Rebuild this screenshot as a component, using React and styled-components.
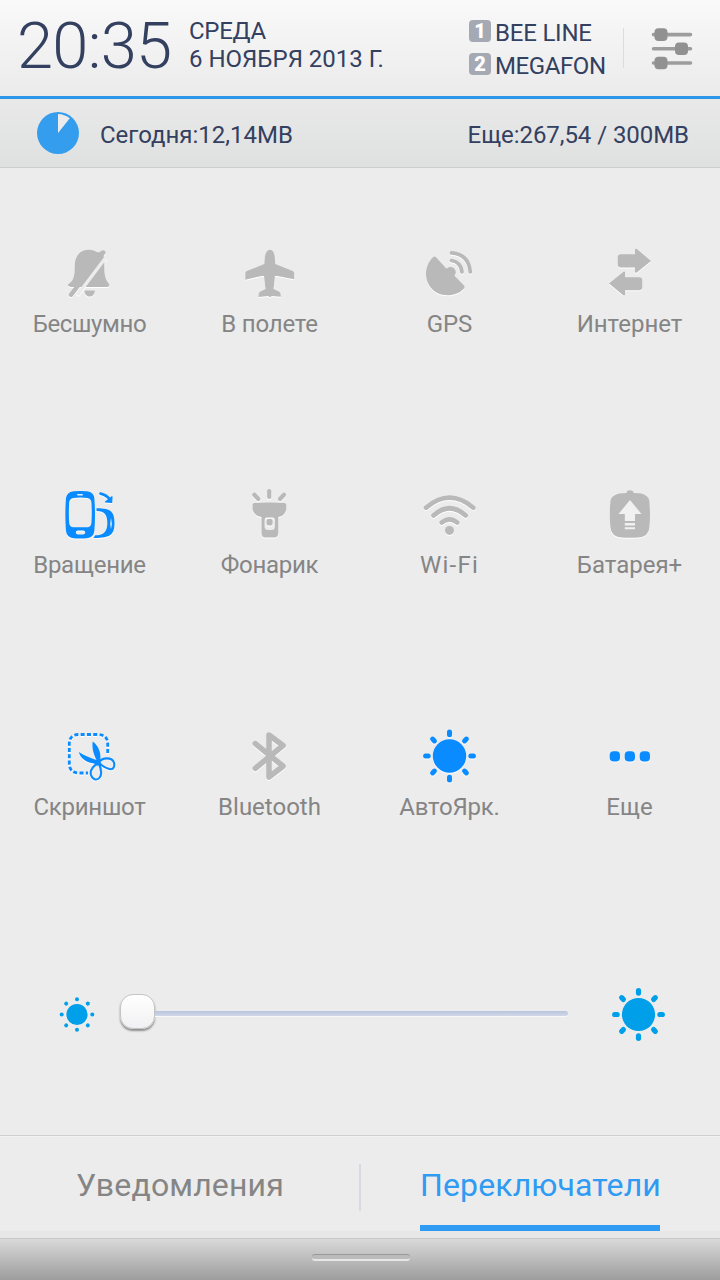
import React from 'react';
import styled, { createGlobalStyle } from 'styled-components';

const BLUE = '#0a8bff';
const GRAY = '#b9b9b9';
const BG = '#ececec';

const GlobalStyle = createGlobalStyle`
  * { box-sizing: border-box; }
  body { margin: 0; background: ${BG}; font-family: Roboto, "Liberation Sans", sans-serif; }
`;

const Screen = styled.main`
  width: 720px;
  height: 1280px;
  display: flex;
  flex-direction: column;
  background: ${BG};
  overflow: hidden;
`;

const Text = styled.span`
  font-size: ${(p) => p.$size}px;
  line-height: ${(p) => p.$line}px;
  letter-spacing: ${(p) => p.$track || 0}px;
  font-weight: ${(p) => p.$weight || 400};
  white-space: nowrap;
`;

const Header = styled.header`
  height: 99px;
  display: flex;
  align-items: flex-start;
  padding-left: 17px;
  color: #33405f;
  background: linear-gradient(#f9f9f9, #ebebeb);
  border-bottom: 3px solid #2f97ea;
`;

const Clock = styled.div`
  width: 172px;
  padding-top: 9px;
`;

const DateBlock = styled.div`
  width: 280px;
  padding-top: 17px;
  display: flex;
  flex-direction: column;
`;

const Carriers = styled.div`
  width: 154px;
  padding-top: 17px;
  display: flex;
  flex-direction: column;
`;

const Carrier = styled.div`
  height: 33px;
  display: flex;
  align-items: flex-start;
  gap: 4px;
`;

const SimBadge = styled.span`
  width: 22px;
  height: 22px;
  margin-top: 3px;
  border-radius: 4px;
  background: #a5a9b4;
  color: #fff;
  font-size: 20px;
  font-weight: 900;
  line-height: 22px;
  text-align: center;
`;

const HeaderDivider = styled.div`
  width: 1px;
  height: 40px;
  margin: 28px 27px 0 0;
  background: #d8dce4;
`;

const SlidersButton = styled.button`
  margin: 26px 0 0;
  padding: 0;
  border: 0;
  background: none;
  line-height: 0;
`;

const Traffic = styled.section`
  height: 69px;
  display: flex;
  align-items: center;
  padding: 0 31px 0 36px;
  color: #33405f;
  background: linear-gradient(#e9e9e9, #dfe0e0);
  border-bottom: 1px solid #cdcdcd;
`;

const TrafficToday = styled.div`
  flex: 1;
  margin-left: 20px;
  padding-top: 4px;
`;

const TrafficLeft = styled.div`
  padding-top: 4px;
`;

const Label = styled(Text)`
  margin-top: 4px;
  margin-right: 1px;
  color: #858585;
`;

const Toggle = styled.div`
  display: flex;
  flex-direction: column;
  align-items: center;
  color: ${(p) => (p.$on ? BLUE : GRAY)};
`;

const Grid = styled.section`
  height: 782px;
  padding-top: 73px;
  display: grid;
  grid-template-columns: repeat(4, 180px);
  grid-auto-rows: 241px;
  overflow: hidden;

  ${Toggle}:nth-child(n + 9) ${Label} {
    margin-top: 5px;
  }
`;

const Icon = styled.svg`
  width: 64px;
  height: 64px;
  overflow: visible;
  fill: currentColor;
  filter: drop-shadow(0 1px 0.5px #fff);
`;

const Brightness = styled.section`
  height: 185px;
  display: flex;
  align-items: flex-start;
  padding: 34px 0 0 58px;
  color: #009fea;
`;

const BrightnessIcon = styled.svg`
  width: ${(p) => p.$size}px;
  height: ${(p) => p.$size}px;
  margin-top: ${(p) => p.$top}px;
  overflow: visible;
  fill: currentColor;
`;

const Slider = styled.div`
  width: 448px;
  height: 38px;
  margin: 9px 43px 0 24px;
  display: flex;
  align-items: center;
`;

const Thumb = styled.div`
  width: 35px;
  height: 35px;
  margin-bottom: 1px;
  border: 1px solid #c4c4c4;
  border-radius: 13px;
  background: linear-gradient(#fff, #f1f1f3);
  box-shadow: 0 2px 2px rgba(0, 0, 0, 0.4);
`;

const Track = styled.div`
  flex: 1;
  height: 5px;
  margin-top: 2px;
  border-radius: 0 3px 3px 0;
  background: linear-gradient(#b9c4dc, #d1d8e8);
  box-shadow: 0 1px 0 #f8f8f8;
`;

const Tabs = styled.nav`
  height: 103px;
  display: flex;
  align-items: flex-start;
  border-top: 1px solid #cfcfcf;
  box-shadow: inset 0 1px 0 #f2f2f2, inset 0 -7px 0 #e7e7e7;
`;

const Tab = styled.div`
  flex: 1;
  height: 95px;
  display: flex;
  justify-content: center;
  color: ${(p) => (p.$active ? '#2f9bf2' : '#858585')};
`;

const TabLabel = styled(Text)`
  width: ${(p) => (p.$active ? '240px' : 'auto')};
  height: 95px;
  padding-top: 29px;
  border-bottom: ${(p) => (p.$active ? '6px solid #2f9bf2' : '0')};
`;

const TabDivider = styled.div`
  width: 2px;
  height: 47px;
  margin: 28px -1px 0;
  background: #d7dae5;
`;

const Handle = styled.footer`
  flex: 1;
  display: flex;
  justify-content: center;
  padding: 15px 0 0 2px;
  border-top: 1px solid #c8c8c8;
  background: linear-gradient(#d9d9d9, #9d9d9d);
`;

const Grip = styled.div`
  width: 98px;
  height: 7px;
  border-radius: 3px;
  border-top: 1px solid #999;
  border-bottom: 2px solid #e6e6e6;
  background: #bbb;
`;

const Rays = ({ c, r, rx, ry }) =>
  [0, 45, 90, 135, 180, 225, 270, 315].map((a) => (
    <rect key={a} x={c - rx} y={c - r - ry} width={rx * 2} height={ry * 2} rx={rx} transform={`rotate(${a} ${c} ${c})`} />
  ));

const icons = {
  silent: (
    <>
      <path d="M12 45.500c-3-.5-2.500-2.800 0-3.600 3.500-2.900 4.700-7 4.700-15.900C16.700 15 22 8.800 31 8.800c3 0 5.300.7 7.300 2 2.500 1.200 4 .2 5.500-1.600L46.500 18c-.7 13 0 19.500 4 24.300 1.500 1.700.7 3.700-1.500 3.700H12z" />
      <path d="M26.500 49.500h10.300c0 8-10.300 8-10.300 0z" />
      <path d="M48 16.200 19.500 54" stroke={BG} strokeWidth="3.400" fill="none" />
      <path d="M45.300 11.500 13 53.800" stroke="currentColor" strokeWidth="4.400" strokeLinecap="round" fill="none" />
    </>
  ),
  plane: (
    <path d="M32 8.800c3 0 4.700 4 4.900 8.500l.3 5.800 17.500 7q1.500.7 1.500 2.200v6l-17-3.400h-2.200L35.500 48l5.800 2.800q1.500.9 1.500 4.900L34 55l-2 1.300L30 55l-9.500.9q0-4.200 1.500-5.100l5.500-2.800L26 34.900h-2.500L7.300 38.700v-6.400q0-1.500 1.500-2.200l17.500-7 .5-5.800c.2-4.500 2.200-8.500 5.200-8.500z" />
  ),
  gps: (
    <>
      <path d="M18 16.200 28.500 27.800a5 5 0 0 1 8 7L46 44.600q1.200 1.300 0 2.900C36 58.500 15 56 9.500 41 6 32 9 22 15 16.300q1.600-1.500 3-.1z" />
      <path d="M33.500 19.500q9.500 1.500 10.500 11.500M33.500 11.800q17.500 1.500 18.800 19.200" stroke="currentColor" strokeWidth="3.700" strokeLinecap="round" fill="none" />
    </>
  ),
  internet: (
    <>
      <path d="M23 13.300h14V8.500q.6-1.300 1.800-.5L53 20 38.800 31.500q-1.300.8-1.800-.5v-4.500H23q-3.300 0-3.300-3.300v-6.600q0-3.300 3.300-3.300z" />
      <path d="M41 36.200H27v-5.100q-.6-1-1.700-.1L11 42.500l14.200 11.700q1.200.8 1.800-.2v-4.700h14q3.300 0 3.300-3.300v-6.500q0-3.300-3.300-3.300z" />
    </>
  ),
  rotate: (
    <>
      <path fillRule="evenodd" d="M15.500 9.300q6.700-.8 13.400 0 7.100.8 7.500 7.500 1.200 16 0 31.700-.6 7-7.500 7.700-6.700.8-13.400 0-6.800-.7-7.600-7.700-1.200-16 0-31.700.8-6.700 7.600-7.500zM15.500 15.900q-4 .6-4.300 4.600-.7 10.500 0 20.400.3 4 4.100 4.300h14q3.800-.3 4.100-4.300.7-9.900 0-20.400-.3-4-4.200-4.600-6.900-.8-13.700 0zM20 48.500q-2.200 0-2.200 2t2.200 2h5q2.200 0 2.200-2t-2.200-2z" />
      <rect x="19" y="11.900" width="6" height="1.600" rx=".8" fill="#dff0ff" />
      <path fillRule="evenodd" d="M38.500 26.300C52 26.300 56.500 29 56.500 41S52 56.200 35.500 56l1.700-2.700C45 53.200 49 50.500 49.300 42 49.500 33 47 29 38.500 29zM53 36q-1.400 5.500 0 11 1.600-5.500 0-11z" />
      <path d="M42.500 11.600q6 1.200 9.500 6" stroke="currentColor" strokeWidth="2.700" strokeLinecap="round" fill="none" />
      <path d="m54 14.800-.3 5.500-6.200-.3z" stroke="currentColor" strokeWidth="1.200" strokeLinejoin="round" />
    </>
  ),
  torch: (
    <>
      <path d="M31.200 9v6M16.300 12.800l4 4.200M46 12.800 42 17" stroke="currentColor" strokeWidth="4.200" strokeLinecap="round" />
      <path fillRule="evenodd" d="M16 21q-1.500.5-1.500 2v4.500q2 6.500 9 7.500V51q.2 4.500 4 4.500h8.800q3.700 0 4-4.500V35q6.500-1 8-7.500V23q0-1.500-1.500-2-15.500-1.200-30.800 0zm12.500 14.500h6.200q2.200.3 2.200 2.500v6.500q-.2 3.500-3 3.500h-4.300q-3-.2-3-3.500V38q0-2.200 1.900-2.500z" />
      <rect x="28.600" y="37" width="6" height="6.400" rx="2" />
    </>
  ),
  wifi: (
    <>
      <path d="M8 25.700q23.500-20 47.300 0M15.500 33.500q16-14.500 32.200 0M23.700 40.600q7.800-6.600 15.500 0" stroke="currentColor" strokeWidth="4.600" strokeLinecap="round" fill="none" />
      <circle cx="31.500" cy="48.400" r="4.500" />
    </>
  ),
  battery: (
    <>
      <path d="M28.500 11q0-2.800 3.500-2.800t3.500 2.800q15.500-.5 16 9.500 1 12 0 24-.5 10.500-11.500 11-8 .6-16 0-11-.5-11.700-11-1-12 0-24Q12.500 11 28.500 11z" />
      <path fill="#f1f1f1" d="m32 18 11.500 14H37v7H26.800v-7h-6.300zM26.800 41H37v2.500H26.800zM26.800 45.200H37v2H26.800z" />
    </>
  ),
  screenshot: (
    <>
      <path d="M49.700 30V21q0-9-9-9.500H20q-8.500.5-8.700 9V41q.2 8.500 8.700 9h10" stroke="currentColor" strokeWidth="2.800" strokeDasharray="4 2.300" fill="none" />
      <path d="M40.500 39.800C44 34 54 34 56 39.500c1.300 6-2 7.500-5.500 6.300-4-1.200-7-3.500-10-6zM40.500 39.800C36 42.500 31.500 47 33 52c1.800 5.500 6.500 5.500 8.700 2.500 2.500-3.500 1-10-1.200-14.700z" stroke="currentColor" strokeWidth="2.100" fill={BG} />
      <path d="M34.700 18.500C41 23 43.500 31 42.200 38.500l1.300 2.700-4.500 1.600-3-2.300C28.500 39.500 22.500 35.500 20.700 29c6.500 4 12 6 17.800 8C35.500 31 33.700 25 34.700 18.500z" />
    </>
  ),
  bluetooth: (
    <path d="M17.300 20.600 45 43.200 31 54V12l14 10.600L17.300 45.300" stroke="currentColor" strokeWidth="5.600" strokeLinecap="round" strokeLinejoin="round" fill="none" />
  ),
  auto: (
    <>
      <circle cx="31.500" cy="33" r="16.700" />
      <g transform="translate(-.5 1)"><Rays c={32} r={22.600} rx={2.500} ry={3.800} /></g>
    </>
  ),
  more: [12, 27, 42].map((x) => <rect key={x} x={x - 0.3} y="28.300" width="10.300" height="10.300" rx="4" />),
};

const toggles = [
  { id: 'silent', label: 'Бесшумно', track: -0.35 },
  { id: 'plane', label: 'В полете', track: -0.2 },
  { id: 'gps', label: 'GPS' },
  { id: 'internet', label: 'Интернет' },
  { id: 'rotate', label: 'Вращение', on: true, track: -0.25 },
  { id: 'torch', label: 'Фонарик', track: -0.3 },
  { id: 'wifi', label: 'Wi-Fi', track: 1.2 },
  { id: 'battery', label: 'Батарея+' },
  { id: 'screenshot', label: 'Скриншот', on: true, track: -0.25 },
  { id: 'bluetooth', label: 'Bluetooth' },
  { id: 'auto', label: 'АвтоЯрк.', on: true, track: -0.2 },
  { id: 'more', label: 'Еще', on: true },
];

export default function App() {
  return (
    <Screen>
      <GlobalStyle />
      <Header>
        <Clock><Text $size={65} $line={74} $weight={300} $track={-0.7}>20:35</Text></Clock>
        <DateBlock>
          <Text $size={24} $line={28} $track={-0.3}>СРЕДА</Text>
          <Text $size={24} $line={28}>6 НОЯБРЯ 2013 Г.</Text>
        </DateBlock>
        <Carriers>
          <Carrier><SimBadge>1</SimBadge><Text $size={24} $line={32} $track={-0.2}>BEE LINE</Text></Carrier>
          <Carrier><SimBadge>2</SimBadge><Text $size={24} $line={32} $track={-0.4}>MEGAFON</Text></Carrier>
        </Carriers>
        <HeaderDivider />
        <SlidersButton aria-label="Настройки">
          <svg width="42" height="46" viewBox="0 0 42 46" fill="#919191">
            <path d="M2.500 8.600h37M2.500 22.800h37M2.500 37h37" stroke="#9d9d9d" strokeWidth="3.600" strokeLinecap="round" />
            <rect x="3.500" y="2.300" width="13" height="12.600" rx="4" />
            <rect x="24" y="16.500" width="13" height="12.600" rx="4" />
            <rect x="3.500" y="30.700" width="13" height="12.600" rx="4" />
          </svg>
        </SlidersButton>
      </Header>
      <Traffic>
        <svg width="44" height="44" viewBox="0 0 44 44">
          <circle cx="22" cy="22" r="21" fill="#349dee" />
          <path d="M22 22V3q6.500.3 11.800 4.200z" fill="#ececec" />
        </svg>
        <TrafficToday><Text $size={24} $line={30}>Сегодня:12,14MB</Text></TrafficToday>
        <TrafficLeft><Text $size={24} $line={30} $track={-0.06}>Еще:267,54 / 300MB</Text></TrafficLeft>
      </Traffic>
      <Grid>
        {toggles.map((t) => (
          <Toggle key={t.id} $on={t.on}>
            <Icon viewBox="0 0 64 64">{icons[t.id]}</Icon>
            <Label $size={24} $line={30} $track={t.track}>{t.label}</Label>
          </Toggle>
        ))}
      </Grid>
      <Brightness>
        <BrightnessIcon $size={38} $top={11} viewBox="0 0 38 38">
          <circle cx="19" cy="19.500" r="10.600" />
          <g transform="translate(0 .5)"><Rays c={19} r={15.300} rx={2} ry={2} /></g>
        </BrightnessIcon>
        <Slider><Thumb /><Track /></Slider>
        <BrightnessIcon $size={54} $top={3} viewBox="0 0 54 54">
          <circle cx="27.500" cy="27.500" r="16.600" />
          <g transform="translate(.5 .5)"><Rays c={27} r={22.600} rx={2.600} ry={3.800} /></g>
        </BrightnessIcon>
      </Brightness>
      <Tabs>
        <Tab><TabLabel $size={32} $line={40} $track={0.15}>Уведомления</TabLabel></Tab>
        <TabDivider />
        <Tab $active><TabLabel $active $size={32} $line={40} $track={0.12}>Переключатели</TabLabel></Tab>
      </Tabs>
      <Handle><Grip /></Handle>
    </Screen>
  );
}
